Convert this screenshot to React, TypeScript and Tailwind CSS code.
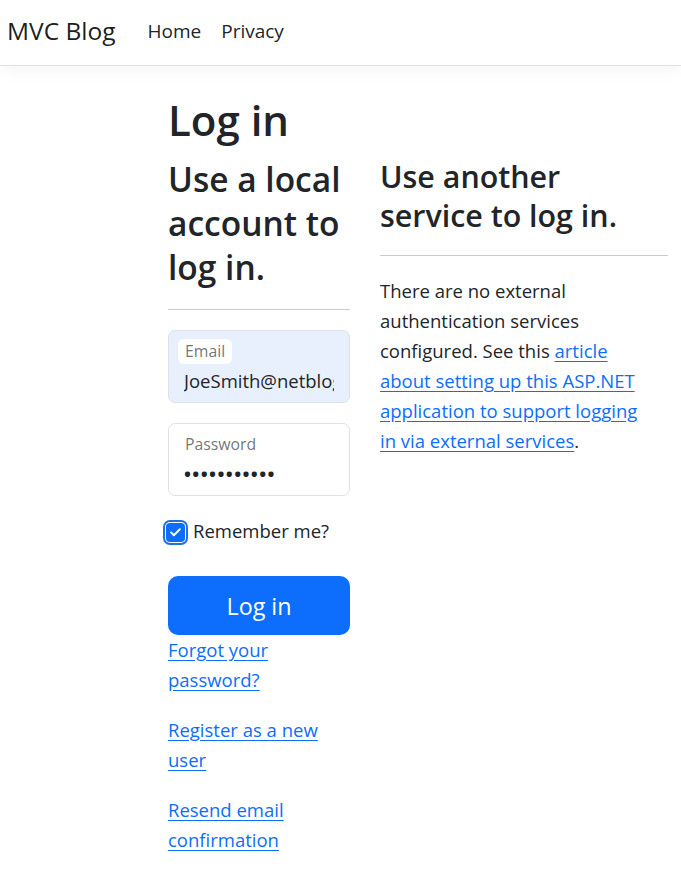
import { Check } from 'lucide-react'

const font = "font-['Open_Sans','Noto_Sans',sans-serif]"

function NavBar() {
  return (
    <nav className="flex h-[66px] items-center border-b border-[#e0e0e0] bg-white pb-[3px] pl-[7px] shadow-[0_5px_15px_rgba(0,0,0,0.04)]">
      <a className="mr-[32px] text-[24.5px] text-[rgba(0,0,0,0.9)]">MVC Blog</a>
      <ul className="flex gap-[20px] text-[19px] text-[#212529]">
        <li>Home</li>
        <li>Privacy</li>
      </ul>
    </nav>
  )
}

function FloatingField({ label, value, autofill, password }: { label: string; value: string; autofill?: boolean; password?: boolean }) {
  return (
    <div
      className={
        'relative h-[73px] overflow-hidden rounded-[7px] border border-[#dee2e6] ' +
        (autofill ? 'bg-[#e8f0fe]' : 'bg-white')
      }
    >
      <span className="absolute left-[9px] top-[8px] rounded-[6px] bg-white px-[7px] text-[15.8px] leading-[25px] text-[rgba(33,37,41,0.65)]">
        {label}
      </span>
      <div className="absolute left-[15px] right-[15px] top-[35px] overflow-hidden whitespace-nowrap text-[18.5px] leading-[30px] text-[#212529]">
        {password ? <span className="font-bold tracking-[1.4px]">•••••••••••</span> : value}
      </div>
    </div>
  )
}

function RememberMe() {
  return (
    <label className="flex h-[30px] items-center">
      <span className="ml-[-5px] mt-[2px] flex h-[25px] w-[25px] items-center justify-center rounded-[7px] bg-[#1f6fe5]">
        <span className="flex h-[21px] w-[21px] items-center justify-center rounded-[5px] bg-white">
          <span className="flex h-[19px] w-[19px] items-center justify-center rounded-[4px] bg-[#0d6efd]">
            <Check className="h-[13px] w-[13px] text-white" strokeWidth={3.5} />
          </span>
        </span>
      </span>
      <span className="ml-[5px]">Remember me?</span>
    </label>
  )
}

export default function App() {
  const link = 'text-[#0d6efd] underline underline-offset-[3px]'
  return (
    <div className={`${font} min-h-screen bg-white text-[18.5px] leading-[30px] text-[#212529]`}>
      <NavBar />
      <main className="pl-[168px] pt-[27px]">
        <h1 className="mb-[10px] text-[42px] font-semibold leading-[54px]">Log in</h1>
        <div className="grid grid-cols-[182px_288px] gap-x-[30px]">
          <section>
            <h2 className="mb-[10px] text-[33.5px] font-semibold leading-[44px]">Use a local account to log in.</h2>
            <hr className="my-[20px] border-[#c9cacb]" />
            <div className="mb-[20px]">
              <FloatingField label="Email" value="JoeSmith@netblog.com" autofill />
            </div>
            <div className="mb-[20px]">
              <FloatingField label="Password" value="" password />
            </div>
            <div className="mb-[30px]">
              <RememberMe />
            </div>
            <button className="h-[59px] w-full rounded-[10px] bg-[#0d6efd] text-[23.3px] text-white">Log in</button>
            <p className="mb-[20px]">
              <a className={link}>Forgot your password?</a>
            </p>
            <p className="mb-[20px]">
              <a className={link}>Register as a new user</a>
            </p>
            <p className="mb-[20px]">
              <a className={link}>Resend email confirmation</a>
            </p>
          </section>
          <section>
            <h3 className="mb-[10px] max-w-[270px] text-[30.4px] font-semibold leading-[39px]">
              Use another service to log in.
            </h3>
            <hr className="my-[20px] border-[#c9cacb]" />
            <p className="max-w-[276px]">
              There are no external authentication services configured. See this{' '}
              <a className={link}>article about setting up this ASP.NET application to support logging in via external services</a>.
            </p>
          </section>
        </div>
      </main>
    </div>
  )
}
